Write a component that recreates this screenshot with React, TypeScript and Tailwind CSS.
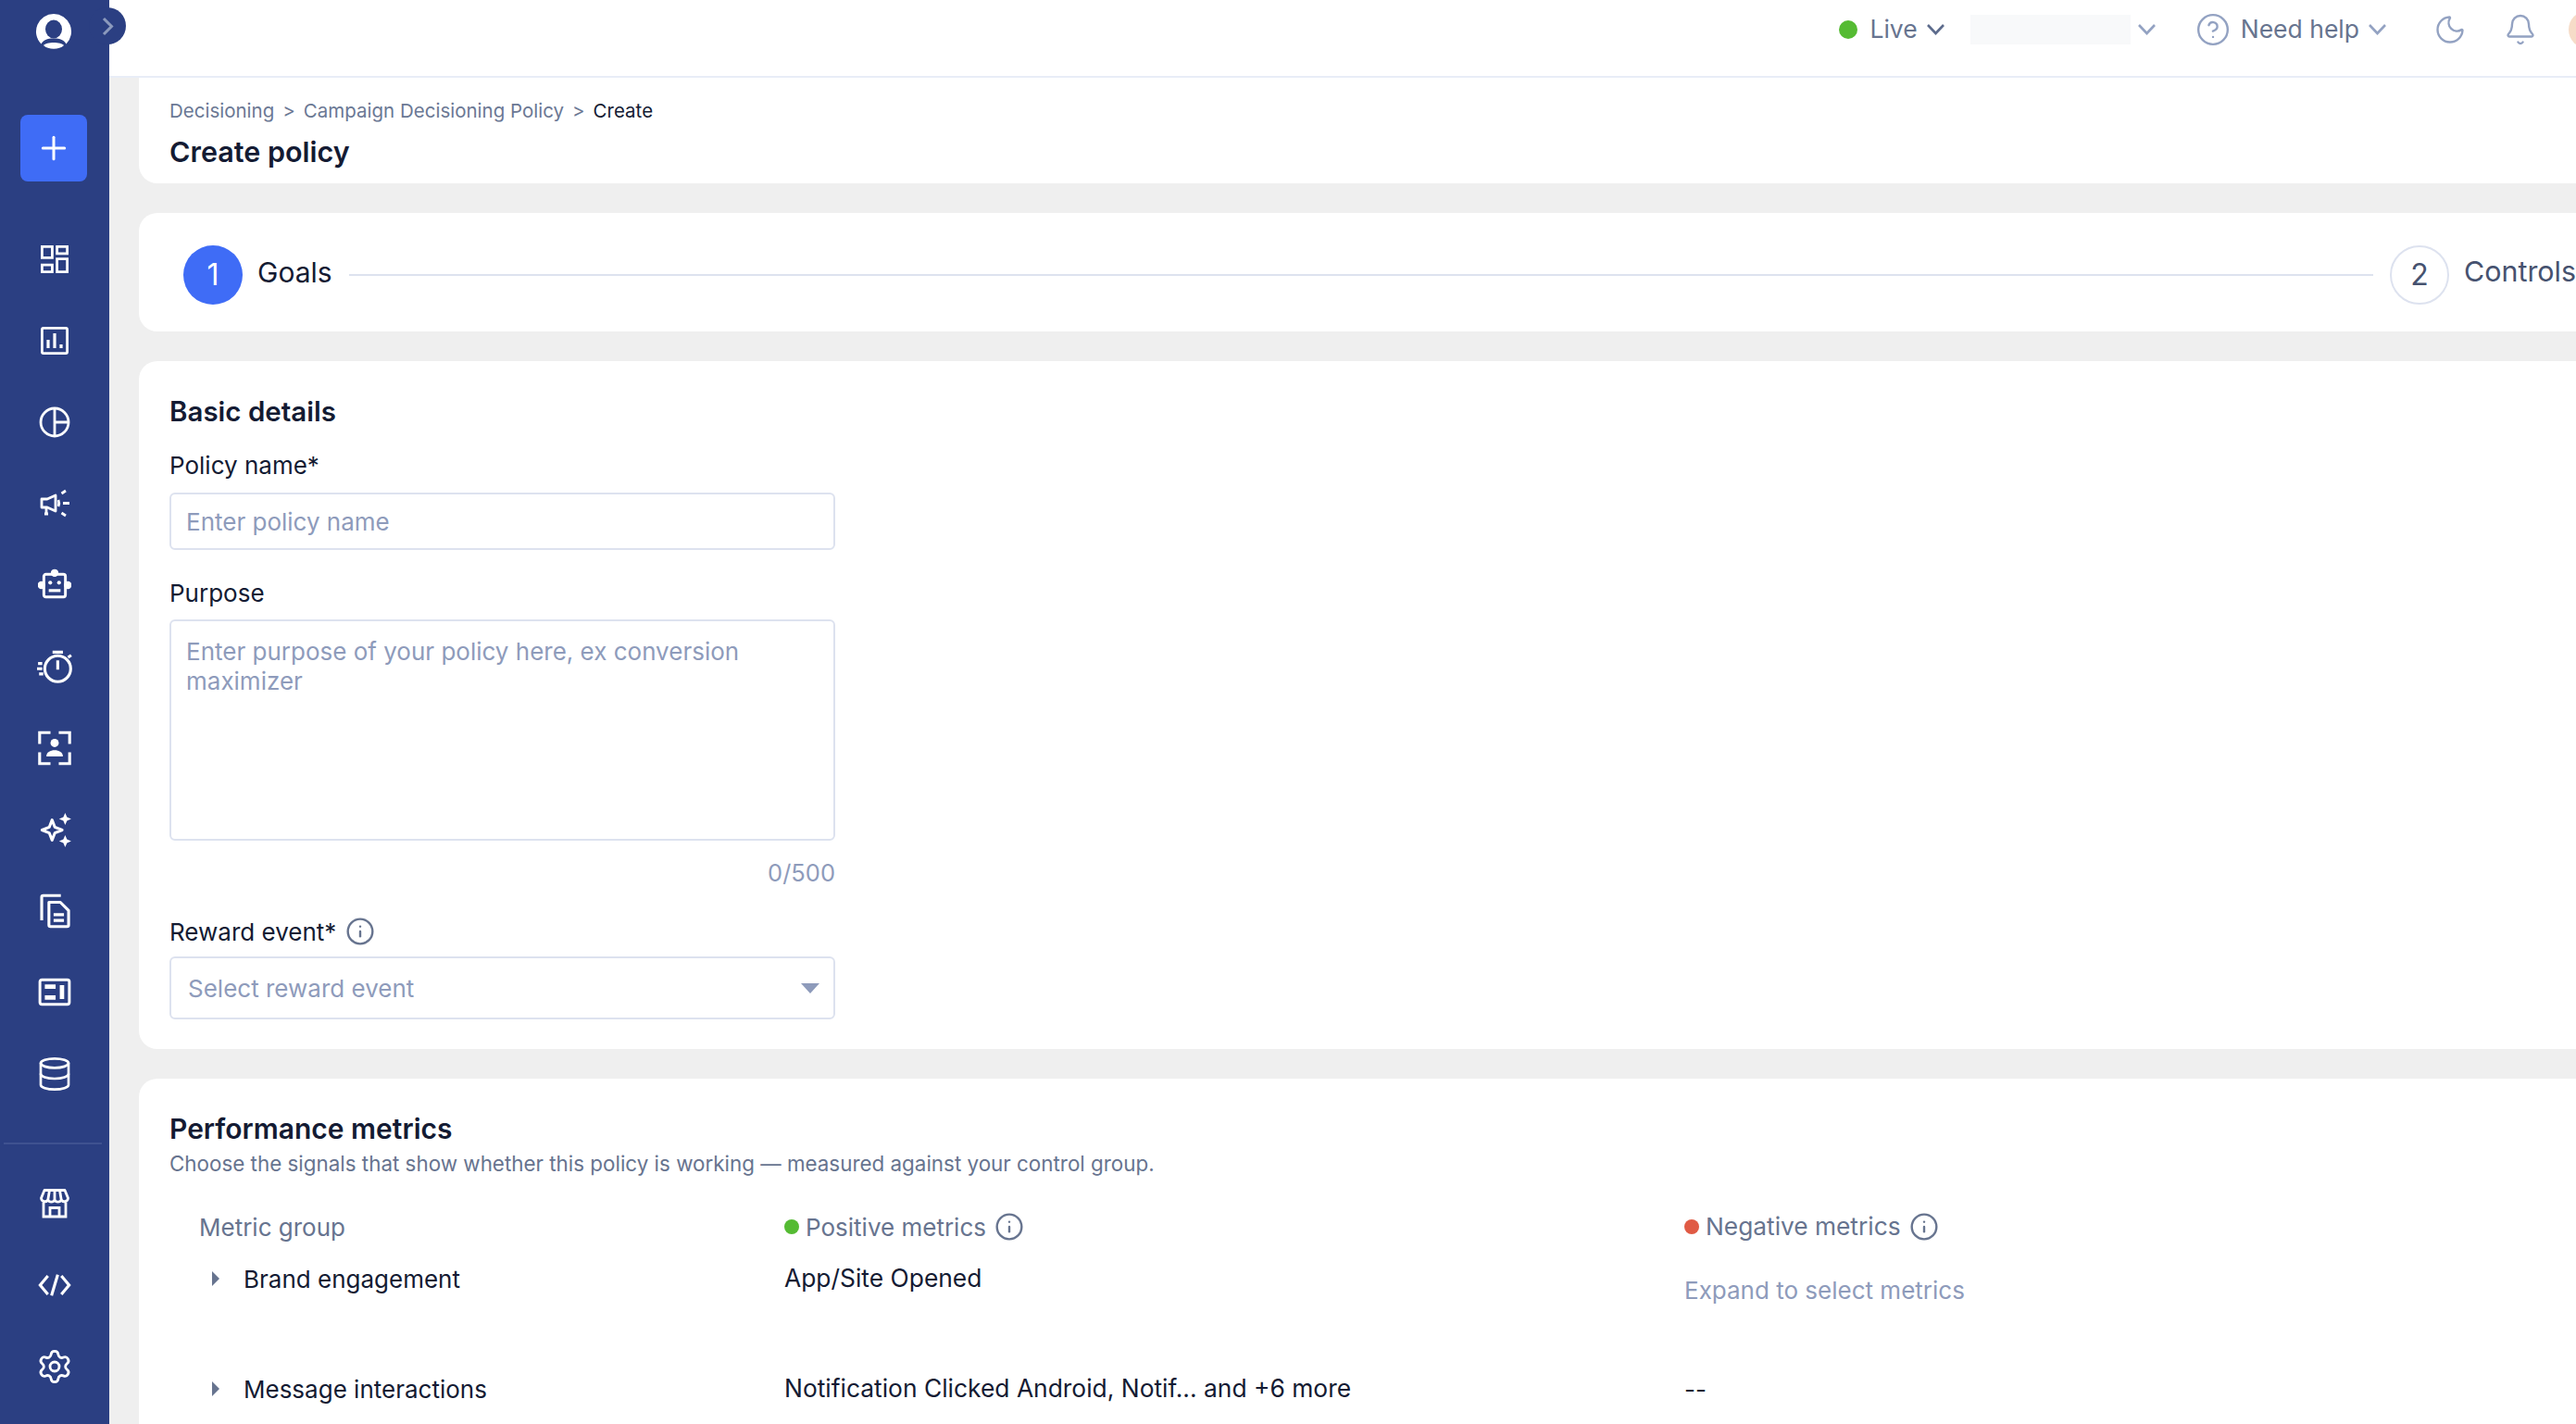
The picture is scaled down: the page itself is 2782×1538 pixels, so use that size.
import { Database, Moon, Bell, CircleHelp, Info, Settings, Plus } from "lucide-react";
import type { ReactNode } from "react";

const FONT = "font-['Inter','Liberation_Sans',sans-serif]";

function Svg({ children, size = 34 }: { children: ReactNode; size?: number }) {
  return (
    <svg width={size} height={size} viewBox="0 0 34 34" fill="none" stroke="currentColor" strokeWidth="2.8">
      {children}
    </svg>
  );
}

const NAV_TOP: ReactNode[] = [
  <Svg key="dash">
    <path d="M3.400 3.400h11v12h-11zM19.600 3.400h11v7.500h-11zM3.400 23.100h11v7.500h-11zM19.600 16.600h11v14h-11z" />
  </Svg>,
  <Svg key="chart">
    <rect x="3.400" y="3.400" width="27.200" height="27.200" rx="1.500" />
    <path d="M10 25v-9M17 25V9M24 25v-4" strokeWidth="3.200" />
  </Svg>,
  <Svg key="pie">
    <circle cx="17" cy="17" r="15" />
    <path d="M17 2v30M17 17h15" />
  </Svg>,
  <Svg key="mega">
    <path d="M3 12h6l9-4v17l-9-4H3z" strokeLinejoin="round" />
    <path d="M8 21v7M6 28h4M21 13q1.500 3.500 0 7M24.500 6l4.500-3M26 16.500h7M24.500 27l4.500 3" />
  </Svg>,
  <Svg key="robot" size={36}>
    <rect x="6" y="6" width="22" height="23" rx="2" />
    <circle cx="17" cy="4.500" r="2.500" fill="currentColor" />
    <circle cx="3.500" cy="17" r="2.500" fill="currentColor" />
    <circle cx="30.500" cy="17" r="2.500" fill="currentColor" />
    <circle cx="12.500" cy="14.500" r="2" fill="currentColor" stroke="none" />
    <circle cx="21.500" cy="14.500" r="2" fill="currentColor" stroke="none" />
    <path d="M11 22.500h12" strokeWidth="3" />
  </Svg>,
  <Svg key="timer" size={38}>
    <circle cx="20" cy="19" r="12.500" />
    <path d="M15 3h10M20 11v9M30 8l3-2M1 14h4M0 19h5M2 24h4" />
  </Svg>,
  <Svg key="frame" size={38}>
    <path d="M13 2H2.500v11M21 2h10.500v11M13 32H2.500V21M21 32h10.500V21" />
    <circle cx="17" cy="12" r="4" fill="currentColor" stroke="none" />
    <path d="M9 25c0-8 16-8 16 0z" fill="currentColor" stroke="none" />
  </Svg>,
  <Svg key="spark" size={37}>
    <path d="M14 7l2.800 7.200L24 17l-7.200 2.800L14 27l-2.800-7.200L4 17l7.200-2.800z" strokeLinejoin="round" />
    <path d="M27 0l1.800 4.200L33 6l-4.200 1.800L27 12l-1.800-4.200L21 6l4.200-1.800zM27 22l1.800 4.200L33 28l-4.200 1.800L27 34l-1.800-4.200L21 28l4.200-1.800z" fill="currentColor" stroke="none" />
  </Svg>,
  <Svg key="docs" size={38}>
    <path d="M4.500 26V3.500q0-1.500 1.500-1.500h17" />
    <path d="M11.500 8.500h11l8 8v14q0 1.500-1.500 1.500H13q-1.500 0-1.500-1.500z" strokeLinejoin="round" />
    <path d="M16 20.500h10M16 26h10" strokeWidth="3" />
  </Svg>,
  <Svg key="news" size={36}>
    <rect x="2" y="4" width="30" height="25" rx="2" />
    <path d="M7 11h11M7 22h11M24.500 9.500v14" strokeWidth="4.500" />
  </Svg>,
  <Database key="db" size={40} strokeWidth={1.600} />,
];

const NAV_BOTTOM: ReactNode[] = [
  <Svg key="store">
    <path
      d="M6 2.500h22l3.500 8.500a3.900 3.900 0 0 1-7.300 1.700 3.900 3.900 0 0 1-7.200 0 3.900 3.900 0 0 1-7.200 0A3.900 3.900 0 0 1 2.500 11zM9.800 12.700L11.500 2.500M17 12.700V2.500M24.200 12.700L22.500 2.500"
      strokeLinejoin="round"
    />
    <path d="M5 15.500v15.500h24V15.500M12 31v-9.500h10V31" />
  </Svg>,
  <Svg key="code" size={38}>
    <path d="M10.500 8L3 17l7.500 9M20 7l-6 20M23.500 8L31 17l-7.500 9" />
  </Svg>,
  <Settings key="gear" size={40} strokeWidth={1.700} />,
];

function NavSlot({ children }: { children: ReactNode }) {
  return <div className="flex h-[88px] items-center justify-center text-white">{children}</div>;
}

function Logo() {
  return (
    <svg width="40" height="40" viewBox="0 0 40 40">
      <path
        d="M20 1a19 19 0 0 1 13.500 32.400C31 29.500 27.500 27.500 20 27.500S9 29.500 6.500 33.400A19 19 0 0 1 20 1z"
        fill="#fff"
      />
      <ellipse cx="20" cy="17.500" rx="9" ry="10" fill="#2b3f82" />
      <path d="M9 35c3-4 19-4 22 0-5 5-17 5-22 0z" fill="#fff" />
    </svg>
  );
}

function Sidebar() {
  return (
    <aside className="relative z-10 flex w-[118px] shrink-0 flex-col bg-[#2b3f82]">
      <div className="flex h-[124px] justify-center pt-[14px] pr-[2px]">
        <Logo />
      </div>
      <div className="mr-[24px] ml-[22px] flex h-[72px] items-center justify-center rounded-lg bg-[#3f6cf6] text-white">
        <Plus size={40} strokeWidth={1.800} />
      </div>
      <nav className="mt-[40px]">
        {NAV_TOP.map((icon, i) => (
          <NavSlot key={i}>{icon}</NavSlot>
        ))}
      </nav>
      <div className="mt-[30px] mb-[20px] ml-[4px] h-[2px] w-[106px] bg-[#3f5290]" />
      <nav>
        {NAV_BOTTOM.map((icon, i) => (
          <NavSlot key={i}>{icon}</NavSlot>
        ))}
      </nav>
      <button className="absolute top-[8px] left-[96px] flex h-[40px] w-[40px] items-center rounded-full bg-[#2b3f82] pl-[14px] text-[#8c9abd]">
        <svg width="13" height="21" viewBox="0 0 13 21" fill="none" stroke="currentColor" strokeWidth="3">
          <path d="M2 2l8.500 8.500L2 19" />
        </svg>
      </button>
    </aside>
  );
}

function Chevron({ className }: { className: string }) {
  return (
    <svg width="21" height="14" viewBox="0 0 21 14" fill="none" stroke="currentColor" strokeWidth="2.600" className={className}>
      <path d="M2 2l8.500 9L19 2" />
    </svg>
  );
}

function Header() {
  return (
    <header className="flex h-[84px] shrink-0 items-center justify-end overflow-hidden border-b-2 border-[#e8edf7] bg-white pb-[18px] text-[26.500px] text-[#67748f]">
      <span className="h-[20px] w-[20px] rounded-full bg-[#55bb33]" />
      <span className="ml-[13px]">Live</span>
      <Chevron className="ml-[9px] text-[#5c6b8c]" />
      <div className="ml-[27px] h-[32px] w-[173px] bg-[#f8f9fa]" />
      <Chevron className="ml-[7px] text-[#93a2c2]" />
      <CircleHelp size={38} strokeWidth={1.500} className="ml-[42px] text-[#93a2c2]" />
      <span className="ml-[11px]">Need help</span>
      <Chevron className="ml-[9px] text-[#93a2c2]" />
      <Moon size={36} strokeWidth={1.600} className="ml-[50px] text-[#93a2c2]" />
      <Bell size={36} strokeWidth={1.600} className="ml-[40px] text-[#93a2c2]" />
      <span className="-mr-[32px] ml-[34px] h-[40px] w-[40px] shrink-0 rounded-full bg-[#f6dcc8]" />
    </header>
  );
}

function Card({ className, children }: { className: string; children: ReactNode }) {
  return <section className={`ml-[32px] bg-white ${className}`}>{children}</section>;
}

function Stepper() {
  return (
    <Card className="mt-[32px] flex h-[128px] shrink-0 items-center rounded-l-[20px] pt-[6px] pl-[48px] text-[30px]">
      <span className="flex h-[64px] w-[64px] shrink-0 items-center justify-center rounded-full bg-[#3f6cf6] text-[32px] text-white">1</span>
      <span className="-mt-[6px] ml-[16px] text-[#141b33]">Goals</span>
      <div className="mx-[18px] h-[2px] flex-1 bg-[#dde2ef]" />
      <span className="flex h-[64px] w-[64px] shrink-0 items-center justify-center rounded-full border-2 border-[#dde2ef] text-[32px] text-[#46526f]">2</span>
      <span className="-mt-[6px] ml-[16px] text-[30.400px] text-[#46526f]">Controls</span>
    </Card>
  );
}

const fieldClass =
  "w-full rounded-md border-2 border-[#dde2ef] bg-white px-[16px] text-[26px] text-[#141b33] outline-none placeholder:text-[#8e9bbb]";

function BasicDetails() {
  return (
    <Card className="mt-[32px] h-[743px] shrink-0 rounded-l-[20px] pt-[36px] pl-[33px]">
      <h2 className="text-[29.500px] leading-[36px] font-semibold text-[#141b33]">Basic details</h2>
      <div className="w-[719px]">
        <label className="mt-[25px] block text-[26px] leading-[32px] text-[#141b33]">Policy name*</label>
        <input className={`${fieldClass} mt-[13px] h-[62px]`} placeholder="Enter policy name" />
        <label className="mt-[31px] block text-[26px] leading-[32px] text-[#141b33]">Purpose</label>
        <textarea
          className={`${fieldClass} mt-[12px] block h-[239px] resize-none pt-[17px] leading-[32px]`}
          placeholder="Enter purpose of your policy here, ex conversion maximizer"
        />
        <p className="mt-[21px] text-right text-[25.500px] leading-[28px] text-[#8e9bbb]">0/500</p>
        <div className="mt-[33px] flex h-[32px] items-center text-[26px] text-[#141b33]">
          Reward event*
          <Info size={32} strokeWidth={1.800} className="ml-[10px] text-[#67748f]" />
        </div>
        <div className="mt-[11px] flex h-[68px] items-center justify-between rounded-md border-2 border-[#dde2ef] pr-[15px] pl-[18px] text-[26px] text-[#8e9bbb]">
          Select reward event
          <span className="h-0 w-0 border-x-[10px] border-t-[11px] border-x-transparent border-t-[#8e9bbb]" />
        </div>
      </div>
    </Card>
  );
}

function Caret() {
  return <span className="h-0 w-0 border-y-[8px] border-l-[8px] border-y-transparent border-l-[#67748f]" />;
}

function Dot({ color }: { color: string }) {
  return <span className={`mr-[7px] h-[16px] w-[16px] rounded-full ${color}`} />;
}

function PerformanceMetrics() {
  return (
    <Card className="mt-[32px] flex-1 rounded-tl-[20px] pt-[36px] pl-[33px] text-[#141b33]">
      <h2 className="text-[30px] leading-[36px] font-semibold">Performance metrics</h2>
      <p className="mt-[2px] text-[22.400px] leading-[36px] text-[#67748f]">
        Choose the signals that show whether this policy is working — measured against your control group.
      </p>
      <div className="mt-[32px] ml-[32px] grid grid-cols-[632px_972px_1fr] text-[26px]">
        <div className="flex h-[36px] items-center text-[#67748f]">Metric group</div>
        <div className="flex h-[36px] items-center text-[#67748f]">
          <Dot color="bg-[#55bb33]" />
          Positive metrics
          <Info size={32} strokeWidth={1.800} className="ml-[9px]" />
        </div>
        <div className="flex h-[36px] items-center text-[#67748f]">
          <Dot color="bg-[#e05a44]" />
          <span className="text-[26.300px]">Negative metrics</span>
          <Info size={32} strokeWidth={1.800} className="ml-[9px]" />
        </div>

        <div className="mt-[20px] flex h-[36px] items-center pl-[14px]">
          <Caret />
          <span className="ml-[26px]">Brand engagement</span>
        </div>
        <div className="mt-[20px] flex h-[36px] items-center text-[26.400px]">App/Site Opened</div>
        <div className="mt-[32px] flex h-[36px] items-center text-[#8e9bbb]">Expand to select metrics</div>

        <div className="mt-[71px] flex h-[36px] items-center pl-[14px]">
          <Caret />
          <span className="ml-[26px]">Message interactions</span>
        </div>
        <div className="mt-[71px] flex h-[36px] items-center text-[26.400px]">Notification Clicked Android, Notif... and +6 more</div>
        <div className="mt-[71px] flex h-[36px] items-center">--</div>
      </div>
    </Card>
  );
}

export default function App() {
  return (
    <div className={`flex h-[1538px] w-[2782px] overflow-hidden ${FONT}`}>
      <Sidebar />
      <main className="relative flex min-w-0 flex-1 flex-col bg-[#efefef]">
        <Header />
        <Card className="h-[114px] shrink-0 rounded-bl-[20px] pt-[22px] pl-[33px]">
          <div className="flex text-[20.500px] leading-[28px] text-[#6b7894]">
            <span>Decisioning</span>
            <span className="mx-[9px]">&gt;</span>
            <span>Campaign Decisioning Policy</span>
            <span className="mx-[9px]">&gt;</span>
            <span className="text-[#141b33]">Create</span>
          </div>
          <h1 className="mt-[10px] text-[30.500px] leading-[40px] font-semibold text-[#141b33]">Create policy</h1>
        </Card>
        <Stepper />
        <BasicDetails />
        <PerformanceMetrics />
      </main>
    </div>
  );
}
